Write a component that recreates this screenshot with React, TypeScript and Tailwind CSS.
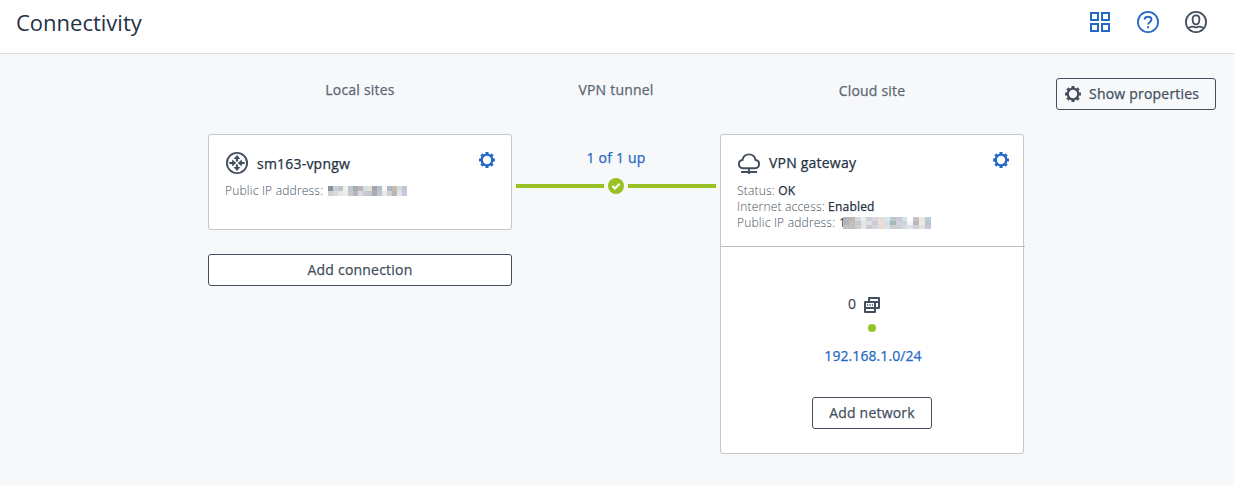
import React from "react";

function Gear({ className }: { className: string }) {
  return (
    <svg viewBox="0 0 16 16" className={className} fill="none" stroke="currentColor">
      <circle cx="8" cy="8" r="5.3" strokeWidth="2.3" />
      {[0, 45, 90, 135, 180, 225, 270, 315].map((a) => (
        <path key={a} d="M8 0v3" strokeWidth="3" transform={`rotate(${a} 8 8)`} />
      ))}
    </svg>
  );
}

function RouterIcon() {
  return (
    <svg viewBox="0 0 24 24" className="h-6 w-6 shrink-0 text-[#434f5e]" fill="none" stroke="currentColor">
      <circle cx="12" cy="12" r="10.1" strokeWidth="1.9" />
      {[0, 90, 180, 270].map((a) => (
        <g key={a} transform={`rotate(${a} 12 12)`}>
          {a % 180 === 0 ? (
            <>
              <path d="M12 10.500V6.500" strokeWidth="2.2" />
              <path d="M8.600 8 12 4l3.400 4z" fill="currentColor" stroke="none" />
            </>
          ) : (
            <>
              <path d="M12 8V4.300" strokeWidth="2.2" />
              <path d="M8.600 7.200 12 11.200l3.400-4z" fill="currentColor" stroke="none" />
            </>
          )}
        </g>
      ))}
    </svg>
  );
}

function CloudIcon() {
  return (
    <svg viewBox="0 0 24 24" className="h-6 w-6 shrink-0 text-[#434f5e]" fill="none" stroke="currentColor" strokeWidth="1.9">
      <path d="M6 17.200C3.400 17.200 1.900 15.400 1.900 13.100c0-2.200 1.500-3.800 3.600-4.100C6.200 5.500 8.700 3.400 12 3.400s5.800 2.100 6.500 5.600c2.100.3 3.600 1.900 3.600 4.100 0 2.300-1.500 4.100-4.100 4.100z" />
      <path d="M12 17v6M4 21h16" />
    </svg>
  );
}

const siteMask = [
  ["#8595a2", "#c8d1d7", "#bac5cc", "#f2f0eb", "#bfc4cd", "#a9adb1", "#bab6b7", "#d1dee7", "#e2e1d9", "#a4a7aa", "#b3c1c8", "#faf7f5", "#acbabf", "#c9bcad", "#d2dce0", "#c3c4d8"],
  ["#cbd3d6", "#d6dbdd", "#e9e8e8", "#e8edf0", "#c9c7ce", "#b3b7bc", "#d8dbe0", "#c7cbce", "#c6c7d0", "#aaaeb0", "#bdc5c8", "#e9e9e8", "#cbd1d1", "#bfb4ab", "#dbe6e9", "#c8c9de"],
];

const cloudMask = [
  ["#b3b5bd", "#c0b7b2", "#d7d7e1", "#f0ece4", "#cbd2d9", "#d9d4de", "#e3ded8", "#dce5e9", "#b9c9cf", "#c6c8dc", "#d6e0e5", "#fff", "#c8c3c8", "#ebe5df", "#bcced5"],
  ["#aeb4bd", "#c7bdb9", "#c4c8d0", "#e2e6e8", "#dddfe3", "#c7cbda", "#eee0d4", "#d6dce4", "#a7b7b9", "#ced3dc", "#c7d4dd", "#f6f4f2", "#b8b5bb", "#eee8df", "#b8c3d4"],
  ["#bfc0c6", "#c1c0c2", "#cbd0d5", "#e7e5e5", "#cecbd0", "#cfd7dd", "#e6dad4", "#d9e1e6", "#c9d0cf", "#d0cddb", "#d4dce2", "#dee3e7", "#cfd2d5", "#e5dfdf", "#c6c8d9"],
];

function Mask({ rows, className }: { rows: string[][]; className: string }) {
  return (
    <span className={className}>
      {rows.map((row, i) => (
        <span key={i} className="flex flex-1">
          {row.map((c, j) => (
            <span key={j} className="flex-1" style={{ backgroundColor: c }} />
          ))}
        </span>
      ))}
    </span>
  );
}

export default function App() {
  return (
    <div className="flex h-[486px] w-[1234px] flex-col overflow-hidden bg-[#f6f8fa] font-['Open_Sans','Noto_Sans',sans-serif] text-[#434f5e]">
      <header className="flex h-[54px] shrink-0 items-start justify-between border-b border-[#d9dce0] bg-white pl-4 pr-[26px]">
        <h1 className="pt-[7px] text-[22px] leading-[30px] text-[#243143]">Connectivity</h1>
        <div className="flex gap-6 pt-[10px]">
          <svg viewBox="0 0 24 24" className="h-6 w-6 text-[#2668c5]" fill="none" stroke="currentColor" strokeWidth="2">
            <path d="M3 3h7v7H3zM14 3h7v7h-7zM3 14h7v7H3zM14 14h7v7h-7z" />
          </svg>
          <svg viewBox="0 0 24 24" className="h-6 w-6 text-[#2668c5]" fill="none" stroke="currentColor">
            <circle cx="12" cy="12" r="10.1" strokeWidth="1.8" />
            <path d="M8.600 9.600C8.600 7.600 10 6.700 12 6.700s3.500 1 3.500 2.800c0 2.400-3.300 2.500-3.300 5.100" strokeWidth="1.9" />
            <path d="M12.100 16.300v2" strokeWidth="2" />
          </svg>
          <svg viewBox="0 0 24 24" className="h-6 w-6 text-[#434f5e]" fill="none" stroke="currentColor" strokeWidth="1.8">
            <circle cx="12" cy="12" r="10.100" />
            <path d="M12 5.400c2.200 0 3.400 1.400 3.400 3.500 0 3-1.300 5.500-3.400 5.500s-3.400-2.500-3.400-5.500c0-2.100 1.200-3.500 3.400-3.500z" />
            <path d="M4.200 18c2-.9 3.600-1.300 5-1.300 1 0 1.800.8 2.800.8s1.800-.8 2.800-.8c1.400 0 3 .4 5 1.300" strokeWidth="1.7" />
          </svg>
        </div>
      </header>

      <main className="flex flex-1 items-start pl-[208px] pt-6 text-sm font-medium leading-5 tracking-[0.21px] [-webkit-text-stroke:0.25px_currentColor]">
        <section className="flex w-[304px] flex-col">
          <h2 className="h-14 pt-[2px] text-center text-[#5c6773]">Local sites</h2>
          <div className="flex h-24 justify-between rounded-[3px] border border-[#c3c7cc] bg-white pl-4 pr-4 pt-4">
            <div>
              <div className="flex h-6 items-center gap-2">
                <RouterIcon />
                <span className="pt-[2px] text-[#243143]">sm163-vpngw</span>
              </div>
              <div className="mt-2 flex h-4 items-center text-xs font-light leading-4 tracking-[0.2px] [-webkit-text-stroke:0px]">
                <span className="w-[98px] whitespace-nowrap">Public IP address:</span>
                <Mask rows={siteMask} className="ml-[5px] flex h-[10px] w-[79px] flex-col" />
              </div>
            </div>
            <Gear className="mt-px h-4 w-4 text-[#2668c5]" />
          </div>
          <button className="mt-6 h-8 rounded-[3px] border border-[#434f5e] bg-white pb-px tracking-[0.21px]">Add connection</button>
        </section>

        <section className="mx-1 flex w-[200px] flex-col items-center">
          <h2 className="h-[68px] pt-[2px] text-[#5c6773]">VPN tunnel</h2>
          <a className="pt-[2px] text-[#2668c5]">1 of 1 up</a>
          <div className="mt-[10px] flex h-4 w-full items-center gap-1">
            <span className="h-1 flex-1 bg-[#97c124]" />
            <svg viewBox="0 0 16 16" className="h-4 w-4" fill="none">
              <circle cx="8" cy="8" r="8" fill="#97c124" />
              <path d="m4.500 8 2.500 2.500 4.600-4.700" stroke="#fff" strokeWidth="2" />
            </svg>
            <span className="h-1 flex-1 bg-[#97c124]" />
          </div>
        </section>

        <section className="flex w-[304px] flex-col">
          <h2 className="h-14 pt-[3px] text-center text-[#5c6773]">Cloud site</h2>
          <div className="h-80 rounded-[3px] border border-[#c3c7cc] bg-white">
            <div className="flex h-28 w-[304px] justify-between border-b border-[#b7bdc3] pl-4 pr-4 pt-4">
              <div>
                <div className="flex h-6 items-center gap-2">
                  <CloudIcon />
                  <span className="text-[#243143]">VPN gateway</span>
                </div>
                <div className="mt-2 text-xs font-light leading-4 tracking-[0.2px] [-webkit-text-stroke:0px]">
                  <p>Status: <span className="font-medium text-[#243143] [-webkit-text-stroke:0.25px_currentColor]">OK</span></p>
                  <p>Internet access: <span className="font-medium text-[#243143] [-webkit-text-stroke:0.25px_currentColor]">Enabled</span></p>
                  <div className="flex h-4 items-center">
                    <span className="w-[98px] whitespace-nowrap">Public IP address:</span>
                    <span className="ml-1 w-[7px] font-medium text-[#243143]">1</span>
                    <Mask rows={cloudMask} className="relative -ml-[3px] flex h-3 w-[88px] flex-col" />
                  </div>
                </div>
              </div>
              <Gear className="mt-px h-4 w-4 text-[#2668c5]" />
            </div>
            <div className="flex flex-col items-center pt-[47px]">
              <div className="-ml-4 flex h-5 items-center gap-2">
                <span className="-mt-px">0</span>
                <svg viewBox="0 0 16 16" className="mt-0.5 h-4 w-4" fill="none" stroke="currentColor" strokeWidth="2">
                  <path d="M5 5V1h10v10h-4" strokeLinejoin="round" />
                  <path d="M1 5h10v10H1zM1 11h10" strokeLinejoin="round" />
                  <path d="M2 6h8v4H2z" fill="#fff" stroke="none" />
                  <path d="M3 8h1.300M5.400 8h1.300M7.800 8h1.300" strokeWidth="1.5" />
                  <path d="M11 5h3" />
                </svg>
              </div>
              <span className="mt-[10px] h-2 w-2 rounded-full bg-[#97c124]" />
              <a className="mt-[14px] pl-0.5 tracking-[0.08px] text-[#2668c5]">192.168.1.0/24</a>
              <button className="mt-[31px] h-8 w-[120px] rounded-[3px] border border-[#434f5e] bg-white pb-px tracking-[0.21px]">Add network</button>
            </div>
          </div>
        </section>

        <button className="ml-8 flex h-8 w-40 items-center gap-2 rounded-[3px] border border-[#434f5e] pl-2 tracking-[0.21px]">
          <Gear className="h-4 w-4 text-[#434f5e]" />
          <span className="pb-px">Show properties</span>
        </button>
      </main>
    </div>
  );
}
